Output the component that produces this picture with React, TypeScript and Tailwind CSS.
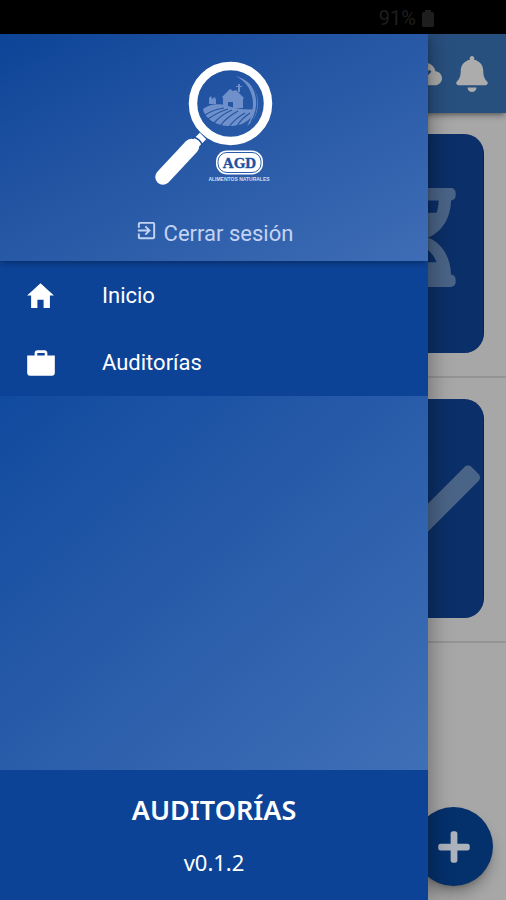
import type { ReactNode } from "react"
import { FaBell, FaCheck, FaHourglassHalf, FaPlus } from "react-icons/fa"
import { IoMdBriefcase, IoMdHome } from "react-icons/io"
import { MdCloudDone, MdExitToApp } from "react-icons/md"

const menuItems = [
  { label: "Inicio", icon: <IoMdHome size={33} /> },
  { label: "Auditorías", icon: <IoMdBriefcase size={34} /> },
]

const Logo = () => (
  <svg width="120" height="125" viewBox="154 60 120 125" role="img" aria-label="AGD Alimentos Naturales">
    {/* farm seen through the lens */}
    <g fill="#6f90ca">
      <path d="M203 109c6-5 16-6 25-3 9 3 18 4 27 3-2 9-10 16-22 17-14 1-28-6-30-17z" />
      <path d="M222 97l8-8 3 2 3-1 8 8-1 1v9h-10v-6h-5v5l-5-1v-8z" />
      <path d="M238 84h2v8h-2zM236 86h6v1h-6zM209 98l2-2 1 3 3-2 1 3v4h-7z" />
      <path d="M236 76c13 4 22 14 22 27 0 10-4 18-11 23 4-7 6-14 6-22 0-12-6-22-17-28z" />
    </g>
    <g fill="none" stroke="#2556a3" strokeWidth="1.2">
      <path d="M205 115c6-4 12-6 19-7M208 119c7-5 13-8 20-10M214 123c5-6 11-10 18-13M221 125c4-6 10-10 17-14M229 127c4-6 9-10 16-14M237 126c3-5 7-9 13-13" />
      <path d="M250 83c6 8 8 17 6 27-1 5-3 9-5 12" />
    </g>
    <circle cx="230.500" cy="103.500" r="37.500" fill="none" stroke="#fff" strokeWidth="8.500" />
    <path d="M203 136l-7 7" stroke="#fff" strokeWidth="9" />
    <path d="M193 137c4 1 8 4 9 8" fill="none" stroke="#1b4f9f" strokeWidth="1.500" />
    <path d="M191.500 146.500L163 177" stroke="#fff" strokeWidth="15.500" strokeLinecap="round" />
    <rect x="216" y="150.500" width="47" height="24" rx="11" fill="#fff" />
    <rect x="218" y="152.500" width="43" height="20" rx="9" fill="none" stroke="#2a5ba9" strokeWidth="1" />
    <text x="239.500" y="168" textAnchor="middle" fontSize="15" fontWeight="700" fill="#1d50a0" stroke="#1d50a0" strokeWidth="0.400" className="font-['Liberation_Serif',serif]">AGD</text>
    <text x="239" y="181" textAnchor="middle" fontSize="5" fontWeight="700" fill="#d3def0" className="font-['Liberation_Sans',sans-serif]">ALIMENTOS NATURALES</text>
  </svg>
)

const StatusBar = () => (
  <div className="flex h-[34px] items-center justify-end gap-1.5 bg-black pr-[72px] pt-0.5 text-xl text-[#1e1e1e]">
    <span>91%</span>
    <svg width="12" height="17" viewBox="0 0 12 17" fill="currentColor" aria-hidden="true">
      <path d="M3 0h6v2h1.500A1.500 1.500 0 0 1 12 3.500v12a1.500 1.500 0 0 1-1.500 1.500h-9A1.500 1.500 0 0 1 0 15.500v-12A1.500 1.500 0 0 1 1.500 2H3z" />
    </svg>
  </div>
)

const StatusCard = ({ children }: { children: ReactNode }) => (
  <div className="border-b-2 border-[#949494] px-[22px] pb-[23px] pt-[21px]">
    <div className="flex h-[219px] items-center justify-end rounded-[20px] border-r border-[#04206b] bg-[#0b2f68] pb-3 text-[#4a6487]">
      <div className="w-[102px]">{children}</div>
    </div>
  </div>
)

const Page = () => (
  <div className="flex flex-1 flex-col bg-[#a7a7a7]">
    <header className="flex h-[79px] items-center justify-end gap-3 bg-[#28507f] pr-4 text-[#acacac] shadow-md shadow-black/30">
      <MdCloudDone size={34} />
      <button type="button" aria-label="Notificaciones"><FaBell size={36} /></button>
    </header>
    <main>
      <StatusCard><FaHourglassHalf size={99} className="-ml-3" /></StatusCard>
      <StatusCard><FaCheck size={99} /></StatusCard>
    </main>
    <div className="mt-auto flex justify-end px-[13px] pb-[14px]">
      <button type="button" aria-label="Agregar" className="flex size-[79px] items-center justify-center rounded-full bg-[#04306c] text-[#acb3bd] shadow-lg shadow-black/30">
        <FaPlus size={36} />
      </button>
    </div>
  </div>
)

const Drawer = () => (
  <aside className="absolute inset-y-0 left-0 flex w-[428px] max-w-[85%] flex-col bg-[#0c4396] text-white shadow-[4px_0_20px_rgba(0,0,0,0.3)]">
    <div className="z-10 flex flex-col items-center bg-linear-to-br from-[#0c4497] to-[#3f6db5] pb-[11px] pt-[26px] shadow-md shadow-black/20">
      <Logo />
      <button type="button" className="mt-[33px] flex items-center gap-1.5 text-[22px] leading-8 text-[#c3d4f3]">
        <MdExitToApp size={23} className="mb-2" />
        Cerrar sesión
      </button>
    </div>
    <nav className="pt-px">
      {menuItems.map((item) => (
        <a key={item.label} href="#" className="flex h-[67px] items-center px-6 text-[22px]">
          <span className="flex w-[78px]">{item.icon}</span>
          {item.label}
        </a>
      ))}
    </nav>
    <div className="flex-1 bg-linear-to-br from-[#104a9e] to-[#3f6fb6]" />
    <footer className="flex h-[130px] flex-col items-center gap-4 pt-5 font-['Noto_Sans',sans-serif]">
      <h1 className="text-[27px] font-semibold leading-10">AUDITORÍAS</h1>
      <p className="text-[22px] leading-8">v0.1.2</p>
    </footer>
  </aside>
)

const App = () => {
  return (
    <div className="flex min-h-screen flex-col font-[Roboto,sans-serif]">
      <StatusBar />
      <div className="relative flex flex-1 flex-col overflow-hidden">
        <Page />
        <Drawer />
      </div>
    </div>
  )
}

export default App
